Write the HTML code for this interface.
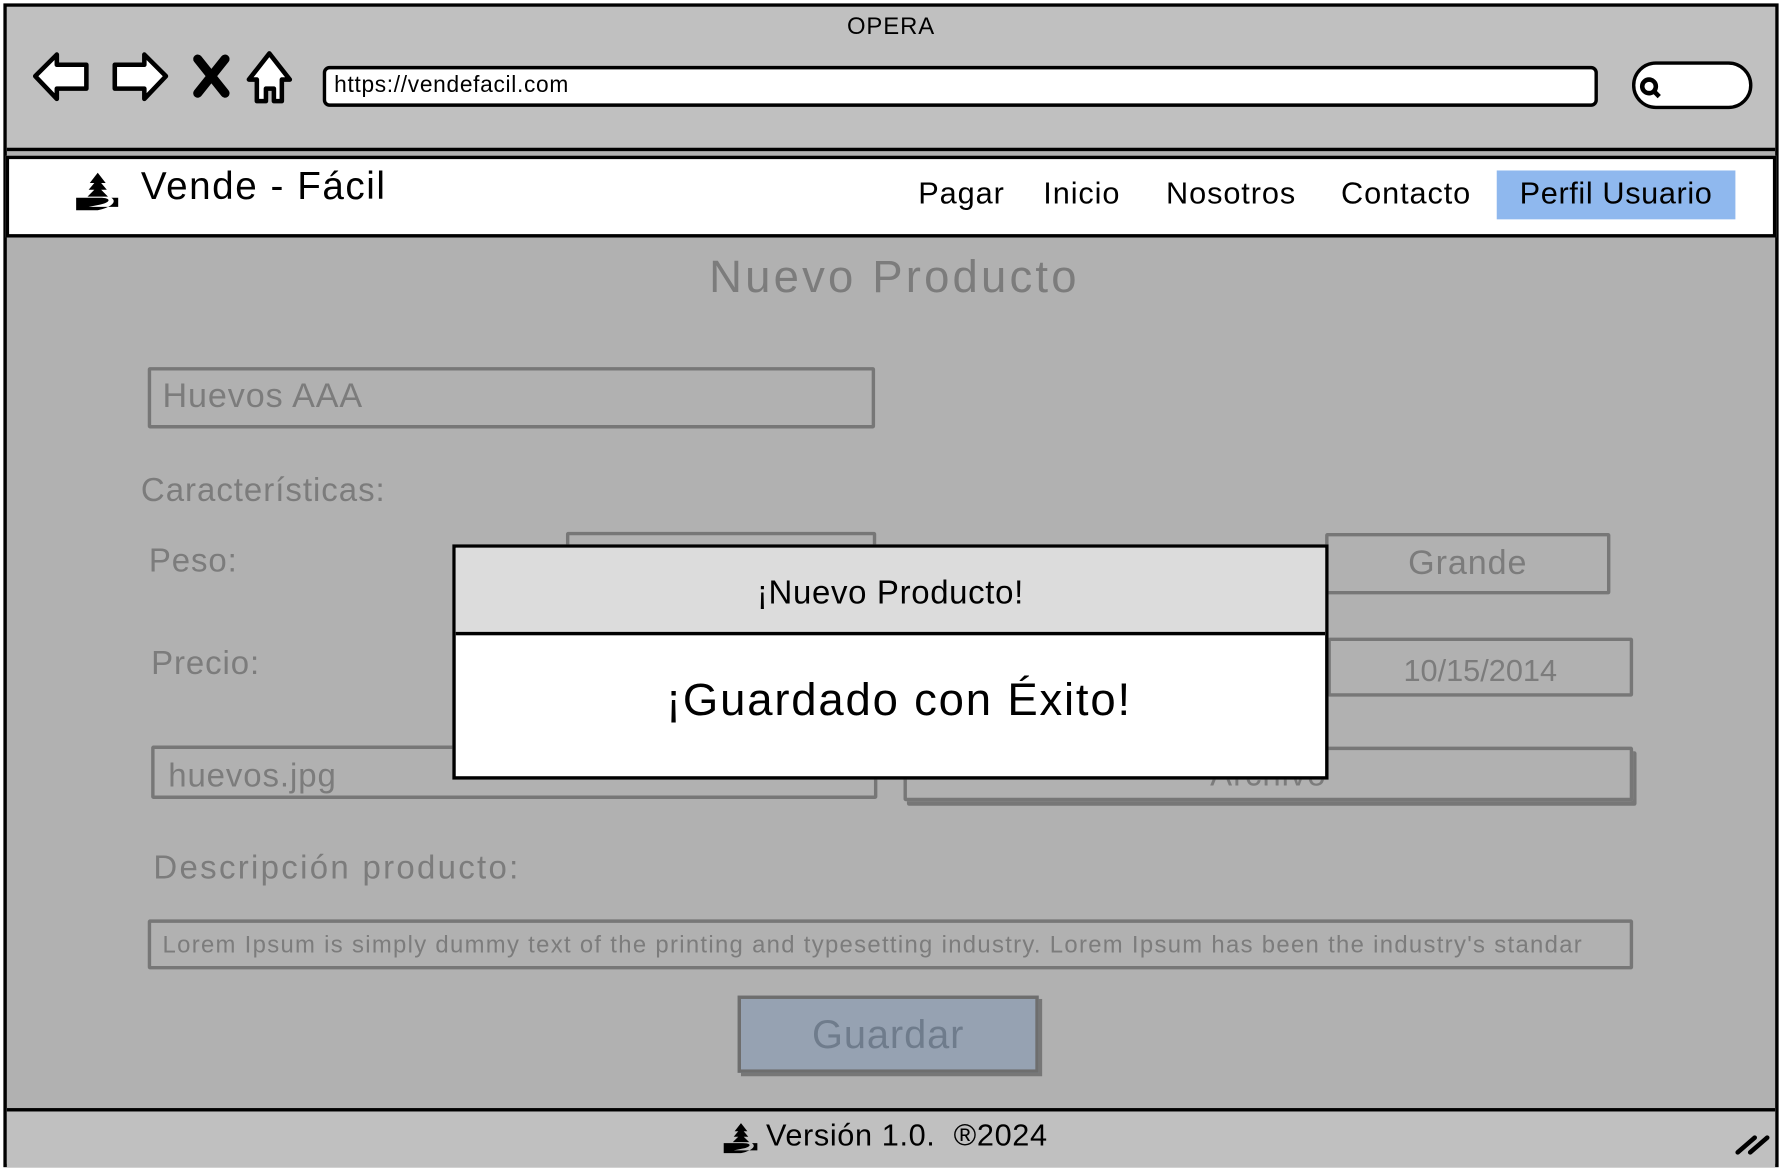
<!DOCTYPE html>
<html><head><meta charset="utf-8"><style>
html,body{margin:0;padding:0;width:1782px;height:1169px;overflow:hidden;background:#fff}
#w{position:absolute;left:0;top:0;width:1568px;height:1029px;transform:scale(1.13648);transform-origin:0 0;font-family:"Liberation Sans",sans-serif;letter-spacing:0.05em}
.a{position:absolute;box-sizing:border-box;white-space:nowrap}
.g{color:#7c7c7c}
.box{border:3px solid #777;border-radius:2px}
</style></head><body><div id="w">
<div class="a" style="left:3px;top:3px;width:1562px;height:1024px;border:3px solid #000;background:#b1b1b1"></div>
<div class="a" style="left:6px;top:6px;width:1556px;height:127px;background:#c0c0c0;border-bottom:3px solid #000"></div>
<div class="a" style="left:0;width:1568px;top:12px;text-align:center;font-size:21px">OPERA</div>
<svg class="a" style="left:26px;top:40px" width="240" height="56" viewBox="0 0 240 56">
<g fill="#fff" stroke="#000" stroke-width="4" stroke-linejoin="round">
<path d="M5 27 L24 8 L24 17 L50 17 L50 38 L24 38 L24 47 Z"/>
<path d="M120 27 L101 8 L101 17 L75 17 L75 38 L101 38 L101 47 Z"/>
<path d="M193 30 L211 7 L229 30 L222 30 L222 49 L215 49 L215 38 L208 38 L208 49 L200 49 L200 30 Z"/>
</g>
<path d="M148 12 L172 42 M172 12 L148 42" stroke="#000" stroke-width="8" stroke-linecap="round"/>
</svg>
<div class="a" style="left:284px;top:58px;width:1122px;height:36px;background:#fff;border:3px solid #000;border-radius:6px;font-size:20px;padding:3px 0 0 7px;letter-spacing:0.03em">https://vendefacil.com</div>
<div class="a" style="left:1436px;top:54px;width:106px;height:42px;background:#fff;border:3px solid #000;border-radius:22px"></div>
<svg class="a" style="left:1441px;top:66px" width="24" height="24"><circle cx="10" cy="10" r="6" fill="none" stroke="#000" stroke-width="4"/><path d="M14 14 L19 19" stroke="#000" stroke-width="4"/></svg>
<div class="a" style="left:5px;top:137px;width:1558px;height:72px;background:#fff;border:3px solid #000"></div>
<svg class="a" style="left:66px;top:150px" width="40" height="36" viewBox="0 0 40 36"><path d="M20 2 L13 11 L17 11 L12 17 L17 17 L11 23 L29 23 L23 17 L28 17 L23 11 L27 11 Z" fill="#000"/><path d="M1 24 L22 24 C32 24 32 28 22 30 L12 32 L38 32 L38 24 L32 24 C38 28 30 33 20 35 L1 35 Z" fill="#000"/></svg>
<div class="a" style="left:124px;top:145px;font-size:34px;letter-spacing:0.04em">Vende - Fácil</div>
<div class="a" style="left:808px;top:155px;font-size:27px">Pagar</div>
<div class="a" style="left:918px;top:155px;font-size:27px">Inicio</div>
<div class="a" style="left:1026px;top:155px;font-size:27px">Nosotros</div>
<div class="a" style="left:1180px;top:155px;font-size:27px">Contacto</div>
<div class="a" style="left:1317px;top:150px;width:210px;height:43px;background:#8fb8ee;font-size:27px;text-align:center;padding-top:5px;letter-spacing:0.02em">Perfil Usuario</div>
<div class="a g" style="left:0;width:1574px;top:222px;text-align:center;font-size:40px;letter-spacing:0.07em">Nuevo Producto</div>
<div class="a box g" style="left:130px;top:323px;width:640px;height:54px;font-size:30px;padding:6px 0 0 10px">Huevos AAA</div>
<div class="a g" style="left:124px;top:416px;font-size:29px;letter-spacing:0.03em">Características:</div>
<div class="a g" style="left:131px;top:478px;font-size:29px">Peso:</div>
<div class="a box" style="left:498px;top:468px;width:273px;height:54px"></div>
<div class="a box g" style="left:1166px;top:469px;width:251px;height:54px;font-size:30px;text-align:center;padding-top:7px">Grande</div>
<div class="a g" style="left:133px;top:568px;font-size:29px">Precio:</div>
<div class="a box g" style="left:1168px;top:561px;width:269px;height:52px;font-size:27px;text-align:center;padding-top:11px;letter-spacing:0">10/15/2014</div>
<div class="a box g" style="left:133px;top:656px;width:639px;height:47px;font-size:29px;padding:8px 0 0 12px">huevos.jpg</div>
<div class="a box g" style="left:795px;top:657px;width:642px;height:48px;font-size:29px;text-align:center;box-shadow:3px 4px 0 #777;padding-top:6px">Archivo</div>
<div class="a g" style="left:135px;top:748px;font-size:29px;letter-spacing:0.07em">Descripción producto:</div>
<div class="a box g" style="left:130px;top:809px;width:1307px;height:44px;font-size:21px;padding:8px 0 0 10px;overflow:hidden;letter-spacing:0.055em">Lorem Ipsum is simply dummy text of the printing and typesetting industry. Lorem Ipsum has been the industry's standar</div>
<div class="a" style="left:649px;top:876px;width:265px;height:68px;background:#96a2b2;border:3px solid #6e6e6e;box-shadow:3px 3px 0 #777;color:#6f7c8c;font-size:35px;text-align:center;padding-top:12px">Guardar</div>
<div class="a" style="left:6px;top:975px;width:1556px;height:52px;background:#c0c0c0;border-top:3px solid #000"></div>
<svg class="a" style="left:636px;top:986px" width="32" height="30" viewBox="0 0 40 36"><path d="M20 2 L13 11 L17 11 L12 17 L17 17 L11 23 L29 23 L23 17 L28 17 L23 11 L27 11 Z" fill="#000"/><path d="M1 24 L22 24 C32 24 32 28 22 30 L12 32 L38 32 L38 24 L32 24 C38 28 30 33 20 35 L1 35 Z" fill="#000"/></svg>
<div class="a" style="left:674px;top:984px;font-size:27px;white-space:pre;letter-spacing:0.02em">Versión 1.0.  ®2024</div>
<svg class="a" style="left:1526px;top:992px" width="32" height="26"><path d="M3 22 L18 9 M14 22 L29 9" stroke="#000" stroke-width="4" stroke-linecap="round"/></svg>
<div class="a" style="left:398px;top:479px;width:771px;height:207px;background:#fff;border:3px solid #000"></div>
<div class="a" style="left:401px;top:482px;width:765px;height:77px;background:#dcdcdc;border-bottom:3px solid #000;font-size:29px;text-align:center;padding-top:24px;letter-spacing:0.02em">¡Nuevo Producto!</div>
<div class="a" style="left:398px;top:594px;width:786px;text-align:center;font-size:40px;letter-spacing:0.04em">¡Guardado con Éxito!</div>
</div></body></html>
